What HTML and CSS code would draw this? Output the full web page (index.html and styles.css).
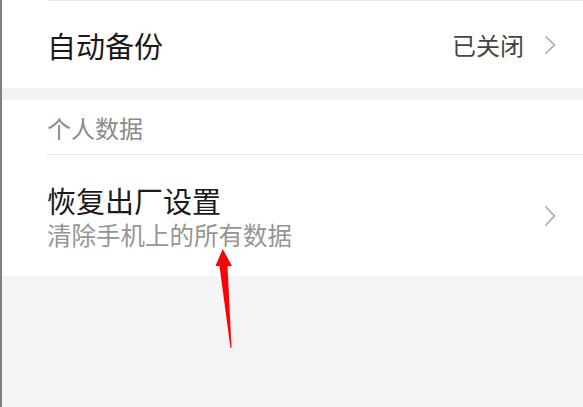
FILE: index.html
```html
<!DOCTYPE html>
<html lang="zh-CN">
<head>
<meta charset="utf-8">
<link rel="stylesheet" href="styles.css">
</head>
<body>
<div class="page">
  <div class="edge"></div>
  <main class="main">
    <div class="group">
      <div class="divider top"></div>
      <div class="row row-single">
        <span class="title">自动备份</span>
        <span class="value">已关闭</span>
        <svg class="chev" width="12" height="20" viewBox="0 0 12 20"><polyline points="1.5,1.5 10.5,10 1.5,18.5" fill="none" stroke="#a8a8a8" stroke-width="1.6"/></svg>
      </div>
    </div>
    <div class="gap"></div>
    <div class="group">
      <div class="section">个人数据</div>
      <div class="divider"></div>
      <div class="row row-double">
        <div class="texts">
          <span class="title">恢复出厂设置</span>
          <span class="sub">清除手机上的所有数据</span>
        </div>
        <svg class="chev" width="12" height="22" viewBox="0 0 12 22"><polyline points="1.5,1.5 10.5,11 1.5,20.5" fill="none" stroke="#a8a8a8" stroke-width="1.6"/></svg>
      </div>
    </div>
  </main>
  <svg class="arrow" width="30" height="110" viewBox="0 0 30 110"><polygon points="12.7,0 22,17 17.5,17 21.5,99 20.5,99 9.5,17 5.5,17" fill="#ff0000"/></svg>
</div>
</body>
</html>
```
FILE: styles.css
```css
html, body {
  margin: 0;
  padding: 0;
  background: #f4f4f4;
}
body {
  font-family: "Noto Sans CJK SC", "Noto Sans", sans-serif;
  width: 583px;
  height: 407px;
  overflow: hidden;
}
.page {
  position: relative;
  display: flex;
  height: 407px;
}
.edge {
  width: 2px;
  flex: none;
  background: #808080;
}
.main {
  flex: 1;
  display: flex;
  flex-direction: column;
}
.group {
  background: #ffffff;
  display: flex;
  flex-direction: column;
}
.divider {
  height: 1px;
  background: #e6e6e6;
  margin-left: 44px;
}
.divider.top {
  margin-left: 46px;
}
.row {
  display: flex;
  align-items: center;
  padding-left: 45px;
  padding-right: 27px;
}
.row-single {
  height: 87px;
}
.row-double {
  height: 121px;
}
.title {
  font-size: 29px;
  line-height: 34px;
  color: #1a1a1a;
}
.row-single .title {
  flex: 1;
}
.value {
  font-size: 24px;
  line-height: 30px;
  color: #444444;
  margin-right: 20px;
}
.texts {
  flex: 1;
  display: flex;
  flex-direction: column;
  gap: 3px;
  margin-top: 2px;
}
.sub {
  font-size: 24.5px;
  line-height: 30px;
  color: #959595;
}
.chev {
  flex: none;
}
.gap {
  height: 12px;
  background: #f2f2f2;
}
.section {
  height: 54px;
  padding-left: 45px;
  display: flex;
  align-items: center;
  font-size: 24px;
  color: #8a8a8a;
}
.arrow {
  position: absolute;
  left: 210px;
  top: 249px;
}
```
